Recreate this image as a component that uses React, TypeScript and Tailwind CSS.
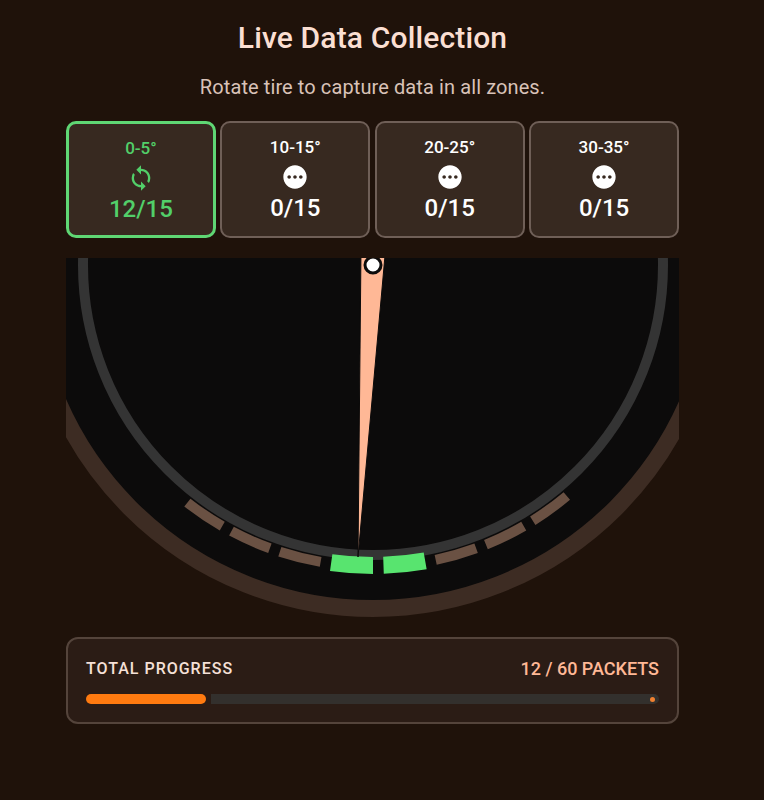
import { MdPending, MdSync } from 'react-icons/md';

const CX = 373;
const CY = 265;

const zones = [
  { label: '0-5°', value: '12/15', active: true },
  { label: '10-15°', value: '0/15', active: false },
  { label: '20-25°', value: '0/15', active: false },
  { label: '30-35°', value: '0/15', active: false },
];

// angle is in degrees from straight down, positive to the right
function pt(r: number, deg: number) {
  const a = (deg * Math.PI) / 180;
  return `${(CX + r * Math.sin(a)).toFixed(2)} ${(CY + r * Math.cos(a)).toFixed(2)}`;
}

function segment(inner: number, outer: number, from: number, to: number) {
  return `M${pt(inner, from)} A${inner} ${inner} 0 0 0 ${pt(inner, to)} L${pt(outer, to)} A${outer} ${outer} 0 0 1 ${pt(outer, from)} Z`;
}

const segments = [-38, -28, -18, -8, 2, 12, 22, 32];

function Gauge() {
  return (
    <svg viewBox="66 258 613 362" className="mt-5 block h-[362px] w-[613px]">
      <circle cx={CX} cy={CY} r={343.5} fill="#0c0b0b" stroke="#3d2c23" strokeWidth={17} />
      <circle cx={CX} cy={CY} r={290} fill="none" stroke="#343434" strokeWidth={10} />
      {segments.map((deg) => {
        const on = deg === -8 || deg === 2;
        return (
          <path
            key={deg}
            d={on ? segment(292, 309, deg, deg + 8) : segment(296.5, 306.5, deg, deg + 8)}
            fill={on ? '#58e46f' : '#6a5143'}
          />
        );
      })}
      <polygon points="361,250 385.5,250 358,557" fill="#ffb896" stroke="#0c0b0b" strokeWidth={1} />
      <circle cx={CX} cy={CY} r={8} fill="#ffffff" stroke="#0c0b0b" strokeWidth={3} />
    </svg>
  );
}

export default function App() {
  return (
    <div className="min-h-[800px] bg-[#1f120a] font-['Roboto',sans-serif]">
      <div className="ml-[66px] w-[613px] pt-[18px]">
        <h1 className="text-center text-[30px] leading-[40px] font-medium tracking-[0.15px] text-[#fbdfd2]">
          Live Data Collection
        </h1>
        <p className="mt-[16px] text-center text-[20px] leading-[26px] tracking-[0.1px] text-[#d9c2b8]">
          Rotate tire to capture data in all zones.
        </p>

        <div className="mt-[21px] grid grid-cols-4 gap-[4.5px]">
          {zones.map((z) => (
            <div
              key={z.label}
              className={`flex h-[117px] flex-col items-center rounded-[10px] bg-[#372920] pt-[13px] ${
                z.active ? 'border-[3px] border-[#5fd774] text-[#52cf69]' : 'border-2 border-[#6f5f57] text-white'
              }`}
            >
              <span className="text-[17px] leading-[22px] font-medium">{z.label}</span>
              {z.active ? <MdSync size={28} className="mt-[5px]" /> : <MdPending size={28} className="mt-[5px]" />}
              <span className="mt-[2px] text-[24px] leading-[30px] font-medium">{z.value}</span>
            </div>
          ))}
        </div>

        <Gauge />

        <div className="mt-[17px] h-[87px] rounded-xl border-2 border-[#54443b] bg-[#2b1c15] px-[18px] pt-[18px]">
          <div className="flex items-center justify-between">
            <span className="text-[16px] leading-[24px] font-medium tracking-[1px] text-[#f5e0d7]">TOTAL PROGRESS</span>
            <span className="text-[18px] leading-[24px] font-medium text-[#ffb896]">12 / 60 PACKETS</span>
          </div>
          <div className="mt-[13px] flex h-[10px] gap-[5px]">
            <div className="w-[120px] rounded-full bg-[#ff7a10]" />
            <div className="relative flex-1 rounded-r-full bg-[#33302d]">
              <div className="absolute top-[3px] right-[4px] h-[5px] w-[5px] rounded-full bg-[#f08030]" />
            </div>
          </div>
        </div>
      </div>
    </div>
  );
}
